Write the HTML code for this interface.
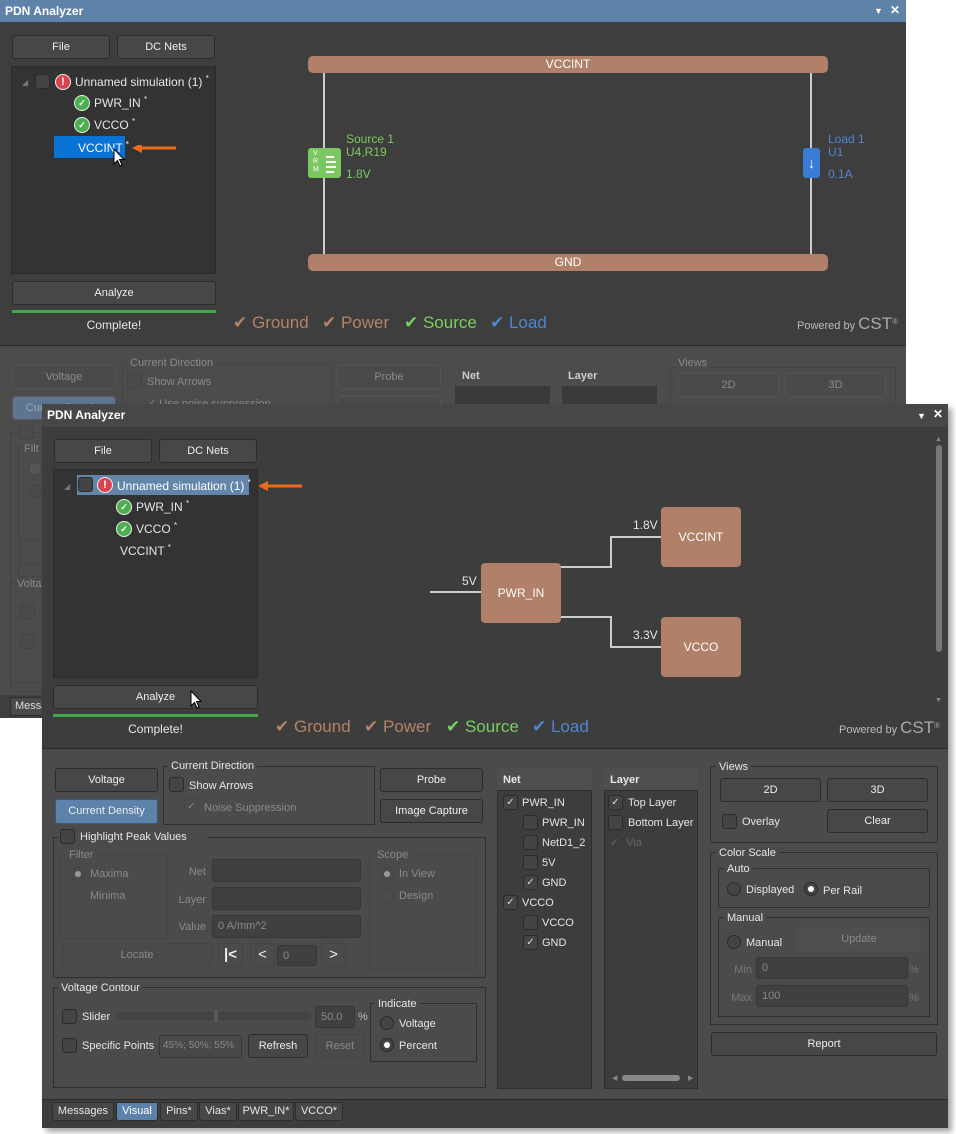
<!DOCTYPE html>
<html><head><meta charset="utf-8"><style>
*{box-sizing:border-box;margin:0;padding:0}
body{width:956px;height:1134px;background:#fff;position:relative;overflow:hidden;font-family:"Liberation Sans",sans-serif;font-size:11px;color:#e6e6e6}
div,span{position:absolute}
sup{font-size:8px;vertical-align:baseline;position:relative;top:-5px;line-height:0}
.b{background:#474747;border:1px solid #2c2c2c;border-radius:3px;text-align:center;color:#eee;line-height:22px}
.d{background:#4a4a4a;border:1px solid #555;border-radius:3px;text-align:center;color:#8a8a8a;line-height:22px}
.g{border:1px solid #2e2e2e}
.gt{background:#4b4b4b;padding:0 3px;white-space:nowrap;line-height:12px}
.cb{width:15px;height:15px;background:#444;border:1px solid #2b2b2b;border-radius:3px}
.rd{width:14px;height:14px;border-radius:50%;background:#444;border:1px solid #2b2b2b}
.t{white-space:nowrap;line-height:14px}
.in{background:#404040;border:1px solid #363636;border-radius:3px;color:#8a8a8a;line-height:20px;padding-left:5px}
.ok{width:16px;height:16px;border-radius:50%;background:#4cb050;border:1px solid #eee;color:#fff;font-size:9px;font-weight:bold;text-align:center;line-height:14px}
.lg{font-size:17px;white-space:nowrap;line-height:20px}
</style></head><body>

<!-- WINDOW 1 -->
<div style="left:0;top:0;width:906px;height:718px;background:#3e3e3e"></div>
<div style="left:0;top:0;width:906px;height:22px;background:#5e82a8"></div>
<div class="t" style="left:5px;top:4px;font-size:12px;font-weight:bold;color:#fff">PDN Analyzer</div>
<div class="t" style="left:874px;top:4px;font-size:9px;color:#fff">▼</div>
<div class="t" style="left:890px;top:3px;font-size:12px;color:#fff;font-weight:bold">✕</div>
<div class="b" style="left:12px;top:35px;width:98px;height:24px">File</div>
<div class="b" style="left:117px;top:35px;width:98px;height:24px">DC Nets</div>
<div style="left:11px;top:66px;width:205px;height:208px;background:#333;border:1px solid #2a2a2a"></div>
<div class="t" style="left:22px;top:76px;color:#777;font-size:8px">◢</div>
<div class="cb" style="left:35px;top:74px"></div>
<div style="left:55px;top:74px;width:16px;height:16px;border-radius:50%;background:#d9434d;border:1px solid #eee;color:#fff;font-weight:bold;text-align:center;line-height:14px;font-size:11px">!</div>
<div class="t" style="left:75px;top:75px;font-size:12px">Unnamed simulation (1) <sup>*</sup></div>
<div class="ok" style="left:74px;top:95px">✓</div>
<div class="t" style="left:94px;top:96px;font-size:12px">PWR_IN <sup>*</sup></div>
<div class="ok" style="left:74px;top:117px">✓</div>
<div class="t" style="left:94px;top:118px;font-size:12px">VCCO <sup>*</sup></div>
<div style="left:54px;top:136px;width:71px;height:22px;background:#0a73d6"></div>
<div class="t" style="left:78px;top:141px;font-size:12px;color:#fff">VCCINT <sup>*</sup></div>
<svg style="position:absolute;left:110px;top:145px" width="70" height="24"><path d="M28 3 L66 3" stroke="#ec6a1c" stroke-width="3"/><path d="M22 3 L32 -2 L32 8 Z" fill="#ec6a1c"/><path d="M4 4 L4 19 L7.5 15.5 L10 21 L12 20 L9.5 14.5 L14 14.5 Z" fill="#fff" stroke="#000" stroke-width="1"/></svg>
<div class="b" style="left:12px;top:281px;width:204px;height:24px">Analyze</div>
<div style="left:12px;top:310px;width:204px;height:3px;background:#3ea84a"></div>
<div class="t" style="left:12px;top:318px;width:204px;text-align:center;font-size:12px">Complete!</div>
<div class="lg" style="left:233px;top:313px;color:#b38367">✔ Ground</div>
<div class="lg" style="left:322px;top:313px;color:#b38367">✔ Power</div>
<div class="lg" style="left:404px;top:313px;color:#7ccf5e">✔ Source</div>
<div class="lg" style="left:490px;top:313px;color:#4f86d0">✔ Load</div>
<div class="t" style="left:797px;top:317px;color:#bbb;font-size:11px">Powered by <span style="position:static;font-size:17px;color:#aaa">CST</span><sup style="color:#aaa">®</sup></div>
<!-- diagram 1 -->
<div style="left:323px;top:70px;width:2px;height:186px;background:#ccc"></div>
<div style="left:810px;top:70px;width:2px;height:186px;background:#ccc"></div>
<div style="left:308px;top:56px;width:520px;height:17px;background:#b08068;border-radius:5px;text-align:center;line-height:17px;font-size:12px;color:#fff">VCCINT</div>
<div style="left:308px;top:254px;width:520px;height:17px;background:#b08068;border-radius:5px;text-align:center;line-height:17px;font-size:12px;color:#fff">GND</div>
<div style="left:308px;top:148px;width:33px;height:30px;background:#7cc860;border-radius:3px"></div>
<div class="t" style="left:313px;top:150px;font-size:7px;line-height:8px;color:#fff">V<br>R<br>M</div>
<div style="left:326px;top:156px;width:8px;height:2px;background:#fff"></div><div style="left:326px;top:161px;width:10px;height:2px;background:#fff"></div><div style="left:326px;top:166px;width:10px;height:2px;background:#fff"></div><div style="left:326px;top:171px;width:8px;height:2px;background:#fff"></div>
<div class="t" style="left:346px;top:133px;color:#7cc860;font-size:12px;line-height:13px">Source 1<br>U4,R19</div>
<div class="t" style="left:346px;top:167px;color:#7cc860;font-size:12px">1.8V</div>
<div style="left:803px;top:148px;width:17px;height:30px;background:#3a7bd5;border-radius:3px;color:#fff;text-align:center;line-height:30px;font-size:14px;font-weight:bold">↓</div>
<div class="t" style="left:828px;top:133px;color:#4f86d0;font-size:12px;line-height:13px">Load 1<br>U1</div>
<div class="t" style="left:828px;top:167px;color:#4f86d0;font-size:12px">0.1A</div>
<!-- lower panel W1 (faded) -->
<div style="left:0;top:345px;width:906px;height:350px;background:#4c4c4c;border-top:1px solid #2a2a2a"></div>
<div style="left:0;top:695px;width:906px;height:23px;background:#3e3e3e"></div>
<div style="left:10px;top:697px;width:40px;height:19px;background:#4a4a4a;border:1px solid #2e2e2e;color:#ddd;line-height:17px;padding-left:4px">Messages</div>
<div class="d" style="left:12px;top:365px;width:104px;height:24px">Voltage</div>
<div class="d" style="left:12px;top:396px;width:104px;height:24px;background:#5d7590;color:#9aa">Current Density</div>
<div style="left:122px;top:363px;width:210px;height:50px;border:1px solid #444"></div>
<div class="t" style="left:128px;top:356px;color:#8a8a8a;background:#4c4c4c;padding:0 2px">Current Direction</div>
<div class="cb" style="left:127px;top:374px;border-color:#444;background:#4a4a4a"></div>
<div class="t" style="left:147px;top:375px;color:#8a8a8a">Show Arrows</div>
<div class="t" style="left:147px;top:397px;color:#8a8a8a">✓ Use noise suppression</div>
<div class="d" style="left:337px;top:365px;width:104px;height:24px">Probe</div>
<div class="d" style="left:337px;top:396px;width:104px;height:24px"></div>
<div class="t" style="left:462px;top:369px;font-weight:bold;color:#ccc">Net</div>
<div style="left:455px;top:386px;width:95px;height:30px;background:#3a3a3a"></div>
<div class="t" style="left:568px;top:369px;font-weight:bold;color:#ccc">Layer</div>
<div style="left:562px;top:386px;width:95px;height:30px;background:#3a3a3a"></div>
<div style="left:670px;top:367px;width:226px;height:50px;border:1px solid #444"></div>
<div class="t" style="left:676px;top:356px;color:#8a8a8a;background:#4c4c4c;padding:0 2px">Views</div>
<div class="d" style="left:678px;top:373px;width:101px;height:24px">2D</div>
<div class="d" style="left:785px;top:373px;width:101px;height:24px">3D</div>
<div style="left:10px;top:432px;width:40px;height:260px;border:1px solid #444"></div>
<div class="cb" style="left:18px;top:425px;border-color:#444;background:#4a4a4a"></div>
<div style="left:18px;top:447px;width:30px;height:130px;border:1px solid #444"></div>
<div class="t" style="left:24px;top:442px;color:#8a8a8a;background:#4c4c4c">Filt</div>
<div class="rd" style="left:28px;top:462px;background:#555;border-color:#444"></div>
<div class="rd" style="left:28px;top:484px;border-color:#444;background:#4a4a4a"></div>
<div style="left:20px;top:540px;width:30px;height:24px;border:1px solid #444;border-radius:3px"></div>
<div style="left:10px;top:583px;width:40px;height:100px;border:1px solid #444"></div>
<div class="t" style="left:17px;top:577px;color:#8a8a8a;background:#4c4c4c">Volta</div>
<div class="cb" style="left:20px;top:604px;border-color:#444;background:#4a4a4a"></div>
<div class="cb" style="left:20px;top:634px;border-color:#444;background:#4a4a4a"></div>

<!-- WINDOW 2 -->
<div style="left:46px;top:408px;width:906px;height:724px;background:rgba(0,0,0,.35);filter:blur(3px)"></div>
<div style="left:42px;top:404px;width:906px;height:724px;background:#3d3d3d"></div>
<div style="left:42px;top:404px;width:906px;height:23px;background:#474747"></div>
<div class="t" style="left:47px;top:408px;font-size:12px;font-weight:bold;color:#fff">PDN Analyzer</div>
<div class="t" style="left:917px;top:409px;font-size:9px;color:#fff">▼</div>
<div class="t" style="left:933px;top:407px;font-size:12px;color:#fff;font-weight:bold">✕</div>
<div class="t" style="left:935px;top:433px;font-size:7px;color:#888">▲</div>
<div style="left:936px;top:445px;width:6px;height:207px;background:#777;border-radius:3px"></div>
<div class="t" style="left:935px;top:694px;font-size:7px;color:#888">▼</div>
<div class="b" style="left:54px;top:439px;width:98px;height:24px">File</div>
<div class="b" style="left:159px;top:439px;width:98px;height:24px">DC Nets</div>
<div style="left:53px;top:469px;width:205px;height:209px;background:#333;border:1px solid #2a2a2a"></div>
<div class="t" style="left:64px;top:480px;color:#777;font-size:8px">◢</div>
<div style="left:77px;top:475px;width:172px;height:20px;background:#6385a9"></div>
<div class="cb" style="left:78px;top:477px"></div>
<div style="left:97px;top:477px;width:16px;height:16px;border-radius:50%;background:#d9434d;border:1px solid #eee;color:#fff;font-weight:bold;text-align:center;line-height:14px;font-size:11px">!</div>
<div class="t" style="left:117px;top:479px;font-size:12px;color:#fff">Unnamed simulation (1) <sup>*</sup></div>
<div class="ok" style="left:116px;top:499px">✓</div>
<div class="t" style="left:136px;top:500px;font-size:12px">PWR_IN <sup>*</sup></div>
<div class="ok" style="left:116px;top:521px">✓</div>
<div class="t" style="left:136px;top:522px;font-size:12px">VCCO <sup>*</sup></div>
<div class="t" style="left:120px;top:544px;font-size:12px">VCCINT <sup>*</sup></div>
<svg style="position:absolute;left:255px;top:480px" width="50" height="12"><path d="M8 6 L47 6" stroke="#ec6a1c" stroke-width="3"/><path d="M3 6 L13 1 L13 11 Z" fill="#ec6a1c"/></svg>
<div class="b" style="left:53px;top:685px;width:205px;height:24px">Analyze</div>
<svg style="position:absolute;left:188px;top:690px" width="16" height="22"><path d="M3 1 L3 16 L6.5 12.5 L9 18 L11 17 L8.5 11.5 L13 11.5 Z" fill="#fff" stroke="#000" stroke-width="1"/></svg>
<div style="left:53px;top:714px;width:205px;height:3px;background:#3ea84a"></div>
<div class="t" style="left:53px;top:722px;width:205px;text-align:center;font-size:12px">Complete!</div>
<div class="lg" style="left:275px;top:717px;color:#b38367">✔ Ground</div>
<div class="lg" style="left:364px;top:717px;color:#b38367">✔ Power</div>
<div class="lg" style="left:446px;top:717px;color:#7ccf5e">✔ Source</div>
<div class="lg" style="left:532px;top:717px;color:#4f86d0">✔ Load</div>
<div class="t" style="left:839px;top:721px;color:#bbb;font-size:11px">Powered by <span style="position:static;font-size:17px;color:#aaa">CST</span><sup style="color:#aaa">®</sup></div>
<!-- diagram 2 -->
<svg style="position:absolute;left:420px;top:500px" width="340" height="180"><g fill="none" stroke="#ccc" stroke-width="2"><path d="M10 92 L62 92"/><path d="M140 67 L191 67 L191 37 L242 37"/><path d="M140 117 L191 117 L191 147 L242 147"/></g></svg>
<div class="t" style="left:462px;top:574px;font-size:12px">5V</div>
<div class="t" style="left:633px;top:518px;font-size:12px">1.8V</div>
<div class="t" style="left:633px;top:628px;font-size:12px">3.3V</div>
<div style="left:481px;top:563px;width:80px;height:60px;background:#b08068;border-radius:4px;text-align:center;line-height:60px;font-size:12px;color:#fff">PWR_IN</div>
<div style="left:661px;top:507px;width:80px;height:60px;background:#b08068;border-radius:4px;text-align:center;line-height:60px;font-size:12px;color:#fff">VCCINT</div>
<div style="left:661px;top:617px;width:80px;height:60px;background:#b08068;border-radius:4px;text-align:center;line-height:60px;font-size:12px;color:#fff">VCCO</div>
<!-- lower panel W2 -->
<div style="left:42px;top:748px;width:906px;height:352px;background:#4b4b4b;border-top:1px solid #2a2a2a;border-bottom:1px solid #2a2a2a"></div>
<div class="b" style="left:55px;top:768px;width:103px;height:24px">Voltage</div>
<div class="b" style="left:55px;top:799px;width:103px;height:25px;background:#5d82aa;border-color:#3a5a7a">Current Density</div>
<div class="g" style="left:163px;top:766px;width:212px;height:59px"></div>
<div class="gt t" style="left:168px;top:759px">Current Direction</div>
<div class="cb" style="left:169px;top:777px"></div>
<div class="t" style="left:189px;top:779px">Show Arrows</div>
<div class="cb" style="left:184px;top:799px;background:#4b4b4b;border-color:#444;color:#888;font-size:10px;line-height:13px;text-align:center">✓</div>
<div class="t" style="left:204px;top:801px;color:#8a8a8a">Noise Suppression</div>
<div class="b" style="left:380px;top:768px;width:103px;height:24px">Probe</div>
<div class="b" style="left:380px;top:799px;width:103px;height:24px">Image Capture</div>
<div class="g" style="left:53px;top:837px;width:433px;height:141px"></div>
<div class="gt" style="left:58px;top:829px;width:150px;height:16px"></div>
<div class="cb" style="left:60px;top:829px"></div>
<div class="t" style="left:80px;top:830px">Highlight Peak Values</div>
<div style="left:60px;top:854px;width:108px;height:85px;border:1px solid #444"></div>
<div class="gt t" style="left:66px;top:848px;color:#8a8a8a">Filter</div>
<div class="rd" style="left:71px;top:867px;background:#4b4b4b;border-color:#444"></div><div style="left:75px;top:871px;width:6px;height:6px;border-radius:50%;background:#999"></div>
<div class="t" style="left:90px;top:867px;color:#8a8a8a">Maxima</div>
<div class="rd" style="left:71px;top:889px;background:#4b4b4b;border-color:#444"></div>
<div class="t" style="left:90px;top:889px;color:#8a8a8a">Minima</div>
<div class="t" style="left:170px;top:865px;width:36px;text-align:right;color:#8a8a8a">Net</div>
<div class="in" style="left:212px;top:859px;width:149px;height:23px"></div>
<div class="t" style="left:170px;top:893px;width:36px;text-align:right;color:#8a8a8a">Layer</div>
<div class="in" style="left:212px;top:887px;width:149px;height:23px"></div>
<div class="t" style="left:170px;top:920px;width:36px;text-align:right;color:#8a8a8a">Value</div>
<div class="in" style="left:212px;top:915px;width:149px;height:23px">0 A/mm^2</div>
<div style="left:369px;top:854px;width:108px;height:116px;border:1px solid #444"></div>
<div class="gt t" style="left:374px;top:848px;color:#8a8a8a">Scope</div>
<div class="rd" style="left:380px;top:867px;background:#4b4b4b;border-color:#444"></div><div style="left:384px;top:871px;width:6px;height:6px;border-radius:50%;background:#999"></div>
<div class="t" style="left:399px;top:867px;color:#8a8a8a">In View</div>
<div class="rd" style="left:380px;top:889px;background:#4b4b4b;border-color:#444"></div>
<div class="t" style="left:399px;top:889px;color:#8a8a8a">Design</div>
<div class="d" style="left:62px;top:943px;width:150px;height:24px;border-color:#444">Locate</div>
<div class="b" style="left:218px;top:943px;width:25px;height:24px;background:#4b4b4b;border-color:#444;font-weight:bold;font-size:15px">|&lt;</div>
<div class="b" style="left:250px;top:943px;width:25px;height:24px;background:#4b4b4b;border-color:#444;font-size:15px">&lt;</div>
<div class="in" style="left:277px;top:945px;width:40px;height:21px">0</div>
<div class="b" style="left:321px;top:943px;width:25px;height:24px;background:#4b4b4b;border-color:#444;font-size:15px">&gt;</div>
<div class="g" style="left:53px;top:987px;width:433px;height:101px"></div>
<div class="gt t" style="left:58px;top:981px">Voltage Contour</div>
<div class="cb" style="left:62px;top:1009px"></div>
<div class="t" style="left:82px;top:1010px">Slider</div>
<div style="left:117px;top:1012px;width:194px;height:8px;background:#444;border-radius:4px"></div>
<div style="left:214px;top:1010px;width:4px;height:12px;background:#5a5a5a"></div>
<div class="in" style="left:315px;top:1006px;width:40px;height:22px">50.0</div>
<div class="t" style="left:358px;top:1010px;color:#bbb">%</div>
<div class="cb" style="left:62px;top:1038px"></div>
<div class="t" style="left:82px;top:1039px">Specific Points</div>
<div class="in" style="left:159px;top:1035px;width:83px;height:23px;background:#484848;font-size:10px;padding-left:3px">45%; 50%; 55%</div>
<div class="b" style="left:248px;top:1034px;width:60px;height:24px">Refresh</div>
<div class="d" style="left:315px;top:1034px;width:50px;height:24px;border-color:#444">Reset</div>
<div class="g" style="left:370px;top:1003px;width:107px;height:59px"></div>
<div class="gt t" style="left:375px;top:997px">Indicate</div>
<div class="rd" style="left:380px;top:1016px"></div>
<div class="t" style="left:399px;top:1017px">Voltage</div>
<div class="rd" style="left:380px;top:1038px"></div><div style="left:384px;top:1042px;width:6px;height:6px;border-radius:50%;background:#fff"></div>
<div class="t" style="left:399px;top:1039px">Percent</div>
<!-- Net list -->
<div style="left:497px;top:768px;width:95px;height:22px;background:#4e4e4e"></div>
<div class="t" style="left:503px;top:773px;font-weight:bold">Net</div>
<div style="left:497px;top:790px;width:95px;height:299px;background:#3d3d3d;border:1px solid #2e2e2e"></div>
<div class="cb" style="left:503px;top:795px;color:#ddd;font-size:10px;line-height:13px;text-align:center">✓</div><div class="t" style="left:522px;top:796px">PWR_IN</div>
<div class="cb" style="left:523px;top:815px"></div><div class="t" style="left:542px;top:816px">PWR_IN</div>
<div class="cb" style="left:523px;top:835px"></div><div class="t" style="left:542px;top:836px">NetD1_2</div>
<div class="cb" style="left:523px;top:855px"></div><div class="t" style="left:542px;top:856px">5V</div>
<div class="cb" style="left:523px;top:875px;color:#ddd;font-size:10px;line-height:13px;text-align:center">✓</div><div class="t" style="left:542px;top:876px">GND</div>
<div class="cb" style="left:503px;top:895px;color:#ddd;font-size:10px;line-height:13px;text-align:center">✓</div><div class="t" style="left:522px;top:896px">VCCO</div>
<div class="cb" style="left:523px;top:915px"></div><div class="t" style="left:542px;top:916px">VCCO</div>
<div class="cb" style="left:523px;top:935px;color:#ddd;font-size:10px;line-height:13px;text-align:center">✓</div><div class="t" style="left:542px;top:936px">GND</div>
<!-- Layer list -->
<div style="left:604px;top:768px;width:94px;height:22px;background:#4e4e4e"></div>
<div class="t" style="left:610px;top:773px;font-weight:bold">Layer</div>
<div style="left:604px;top:790px;width:94px;height:299px;background:#3d3d3d;border:1px solid #2e2e2e"></div>
<div class="cb" style="left:608px;top:795px;color:#ddd;font-size:10px;line-height:13px;text-align:center">✓</div><div class="t" style="left:628px;top:796px">Top Layer</div>
<div class="cb" style="left:608px;top:815px"></div><div class="t" style="left:628px;top:816px">Bottom Layer</div>
<div class="t" style="left:610px;top:836px;color:#666">✓ <span style="position:static;margin-left:4px">Via</span></div>
<div class="t" style="left:612px;top:1072px;color:#888;font-size:7px">◀</div>
<div style="left:622px;top:1075px;width:58px;height:6px;background:#888;border-radius:3px"></div>
<div class="t" style="left:688px;top:1072px;color:#888;font-size:7px">▶</div>
<!-- Views -->
<div class="g" style="left:710px;top:766px;width:228px;height:77px"></div>
<div class="gt t" style="left:716px;top:760px">Views</div>
<div class="b" style="left:720px;top:778px;width:101px;height:24px">2D</div>
<div class="b" style="left:827px;top:778px;width:101px;height:24px">3D</div>
<div class="cb" style="left:722px;top:814px"></div><div class="t" style="left:742px;top:815px">Overlay</div>
<div class="b" style="left:827px;top:809px;width:101px;height:24px">Clear</div>
<div class="g" style="left:710px;top:852px;width:228px;height:173px"></div>
<div class="gt t" style="left:716px;top:846px">Color Scale</div>
<div class="g" style="left:718px;top:868px;width:212px;height:40px"></div>
<div class="gt t" style="left:724px;top:862px">Auto</div>
<div class="rd" style="left:727px;top:882px"></div><div class="t" style="left:746px;top:883px">Displayed</div>
<div class="rd" style="left:804px;top:882px"></div><div style="left:808px;top:886px;width:6px;height:6px;border-radius:50%;background:#fff"></div><div class="t" style="left:823px;top:884px">Per Rail</div>
<div class="g" style="left:718px;top:917px;width:212px;height:100px"></div>
<div class="gt t" style="left:724px;top:911px">Manual</div>
<div class="rd" style="left:727px;top:935px"></div><div class="t" style="left:746px;top:936px">Manual</div>
<div class="d" style="left:797px;top:927px;width:124px;height:24px;border-color:#4e4e4e;background:#4e4e4e">Update</div>
<div class="t" style="left:728px;top:963px;width:24px;text-align:right;color:#777">Min</div>
<div class="in" style="left:756px;top:957px;width:152px;height:22px">0</div>
<div class="t" style="left:909px;top:963px;color:#777">%</div>
<div class="t" style="left:728px;top:991px;width:24px;text-align:right;color:#777">Max</div>
<div class="in" style="left:756px;top:985px;width:152px;height:22px">100</div>
<div class="t" style="left:909px;top:991px;color:#777">%</div>
<div class="b" style="left:711px;top:1032px;width:226px;height:24px">Report</div>
<!-- tabs -->
<div style="left:52px;top:1102px;width:62px;height:19px;background:#474747;border:1px solid #2e2e2e;border-radius:0 0 3px 3px;text-align:center;line-height:17px">Messages</div>
<div style="left:116px;top:1102px;width:42px;height:19px;background:#5d82aa;border:1px solid #2e2e2e;border-radius:0 0 3px 3px;text-align:center;line-height:17px;color:#fff">Visual</div>
<div style="left:160px;top:1102px;width:38px;height:19px;background:#474747;border:1px solid #2e2e2e;border-radius:0 0 3px 3px;text-align:center;line-height:17px">Pins*</div>
<div style="left:199px;top:1102px;width:38px;height:19px;background:#474747;border:1px solid #2e2e2e;border-radius:0 0 3px 3px;text-align:center;line-height:17px">Vias*</div>
<div style="left:238px;top:1102px;width:56px;height:19px;background:#474747;border:1px solid #2e2e2e;border-radius:0 0 3px 3px;text-align:center;line-height:17px">PWR_IN*</div>
<div style="left:295px;top:1102px;width:48px;height:19px;background:#474747;border:1px solid #2e2e2e;border-radius:0 0 3px 3px;text-align:center;line-height:17px">VCCO*</div>
</body></html>
